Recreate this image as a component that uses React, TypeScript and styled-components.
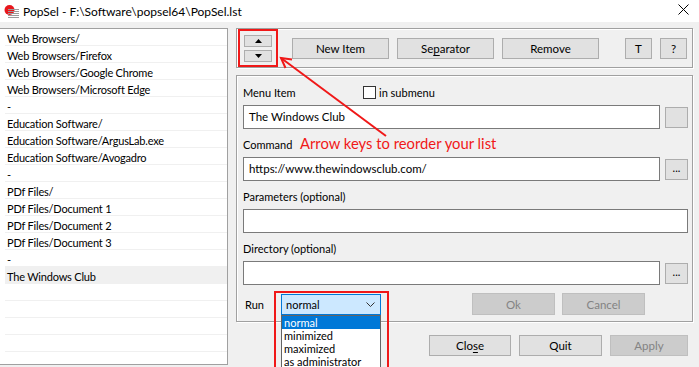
import styled, { createGlobalStyle } from "styled-components";

const GlobalStyle = createGlobalStyle`
  html, body {
    margin: 0;
    padding: 0;
    background: #f0f0f0;
  }
  body {
    font-family: Lato, "Liberation Sans", sans-serif;
    font-size: 11px;
    color: #000;
  }
`;

const items = [
  "Web Browsers/",
  "Web Browsers/Firefox",
  "Web Browsers/Google Chrome",
  "Web Browsers/Microsoft Edge",
  "-",
  "Education Software/",
  "Education Software/ArgusLab.exe",
  "Education Software/Avogadro",
  "-",
  "PDf Files/",
  "PDf Files/Document 1",
  "PDf Files/Document 2",
  "PDf Files/Document 3",
  "-",
  "The Windows Club",
  "",
  "",
  "",
  "",
];

const runModes = ["normal", "minimized", "maximized", "as administrator"];

const App = () => {
  return (
    <Window>
      <GlobalStyle />
      <TitleBar>
        <svg width="16" height="16" viewBox="0 0 16 16">
          <circle cx="6.5" cy="7" r="5" fill="#e8161c" />
          <rect x="5" y="6" width="11" height="1" fill="#9a9a9a" />
          <rect x="5" y="8" width="11" height="1" fill="#9a9a9a" />
          <rect x="5" y="10" width="11" height="1" fill="#9a9a9a" />
          <rect x="5" y="12" width="11" height="1" fill="#9a9a9a" />
          <rect x="5" y="14" width="11" height="1" fill="#9a9a9a" />
        </svg>
        <Title>PopSel - F:\Software\popsel64\PopSel.lst</Title>
        <CloseX>
          <svg width="11" height="11" viewBox="0 0 11 11">
            <path d="M0.5 0.5 L10.5 10.5 M10.5 0.5 L0.5 10.5" stroke="#000" strokeWidth="1" />
          </svg>
        </CloseX>
      </TitleBar>

      <Body>
        <ListBox>
          {items.map((txt, i) => (
            <Row key={i} $selected={txt === "The Windows Club"}>
              {txt}
            </Row>
          ))}
        </ListBox>

        <RightPane>
          <TopGroup>
            <ArrowWrap>
              <ArrowBtn>
                <svg width="7" height="4" viewBox="0 0 7 4">
                  <polygon points="3.5,0 7,4 0,4" fill="#000" />
                </svg>
              </ArrowBtn>
              <ArrowBtn>
                <svg width="7" height="4" viewBox="0 0 7 4">
                  <polygon points="0,0 7,0 3.5,4" fill="#000" />
                </svg>
              </ArrowBtn>
            </ArrowWrap>
            <Button $w={97} style={{ marginLeft: 14 }}>New Item</Button>
            <Button $w={97} style={{ marginLeft: 8 }}>
              Se<u>p</u>arator
            </Button>
            <Button $w={97} style={{ marginLeft: 8 }}>Remove</Button>
            <Button $w={27} style={{ marginLeft: 26 }}>T</Button>
            <Button $w={27} style={{ marginLeft: 8 }}>?</Button>
          </TopGroup>

          <EditGroup>
            <Label>
              <LabelText $w={120}>Menu Item</LabelText>
              <Check />
              <span>in submenu</span>
            </Label>
            <InputRow>
              <TextBox>The Windows Club</TextBox>
              <SmallBtn />
            </InputRow>

            <Label $gap>
              <LabelText $w={57}>Command</LabelText>
              <Note>Arrow keys to reorder your list</Note>
            </Label>
            <InputRow>
              <TextBox>https://www.thewindowsclub.com/</TextBox>
              <SmallBtn>...</SmallBtn>
            </InputRow>

            <Label $gap>Parameters (optional)</Label>
            <InputRow>
              <TextBox />
            </InputRow>

            <Label $gap>Directory (optional)</Label>
            <InputRow>
              <TextBox />
              <SmallBtn>...</SmallBtn>
            </InputRow>

            <RunRow>
              <RunLabel>Run</RunLabel>
              <SelectWrap>
                <span>normal</span>
                <svg width="9" height="5" viewBox="0 0 9 5">
                  <polyline points="0.5,0.5 4.5,4.5 8.5,0.5" fill="none" stroke="#333" strokeWidth="1" />
                </svg>
                <DropList>
                  {runModes.map((m, i) => (
                    <DropItem key={m} $active={i === 0}>
                      {m}
                    </DropItem>
                  ))}
                </DropList>
                <RedFrame />
              </SelectWrap>
              <Button $w={83} $h={22} $disabled style={{ marginLeft: 91 }}>
                Ok
              </Button>
              <Button $w={83} $h={22} $disabled style={{ marginLeft: 7 }}>
                Cancel
              </Button>
            </RunRow>
          </EditGroup>

          <BottomRow>
            <Button $w={82}>
              Clo<u>s</u>e
            </Button>
            <Button $w={83}>Quit</Button>
            <Button $w={78} $disabled>
              Apply
            </Button>
          </BottomRow>
        </RightPane>
      </Body>

      <Pointer width="699" height="367" viewBox="0 0 699 367">
        <path d="M281 58 L386 136" stroke="#f01818" strokeWidth="2" fill="none" />
        <path d="M292 59.5 L281 58 L285.5 68" stroke="#f01818" strokeWidth="2" fill="none" />
      </Pointer>
    </Window>
  );
};

export default App;

const Window = styled.div`
  width: 699px;
  height: 367px;
  position: relative;
  overflow: hidden;
  display: flex;
  flex-direction: column;
  background: #f0f0f0;
`;

const TitleBar = styled.div`
  height: 22px;
  background: #fff;
  display: flex;
  align-items: center;
  padding-left: 3px;
  flex-shrink: 0;
`;

const Title = styled.div`
  margin-left: 4px;
  font-size: 12px;
  margin-top: 1px;
`;

const CloseX = styled.div`
  margin-left: auto;
  margin-right: 10px;
  margin-top: -4px;
  display: flex;
`;

const Body = styled.div`
  flex: 1;
  display: flex;
  padding-top: 6px;
  min-height: 0;
`;

const ListBox = styled.div`
  width: 228px;
  height: 337px;
  box-sizing: border-box;
  border-top: 1px solid #a0a0a0;
  border-right: 1px solid #a0a0a0;
  border-bottom: 1px solid #a0a0a0;
  background: #fff;
  padding-left: 5px;
  flex-shrink: 0;
`;

const Row = styled.div<{ $selected?: boolean }>`
  height: 17px;
  box-sizing: border-box;
  border-bottom: 1px solid #f0f0f0;
  padding: 3px 0 0 2px;
  line-height: 13px;
  font-size: 11px;
  letter-spacing: -0.2px;
  white-space: nowrap;
  background: ${(p) => (p.$selected ? "#f0f0f0" : "#fff")};
`;

const RightPane = styled.div`
  flex: 1;
  display: flex;
  flex-direction: column;
  padding: 0 6px 0 8px;
`;

const etched = `
  border: 1px solid #a0a0a0;
  box-shadow: inset 1px 1px 0 #fff, 1px 1px 0 #fff;
`;

const TopGroup = styled.div`
  ${etched}
  height: 40px;
  box-sizing: border-box;
  display: flex;
  align-items: center;
`;

const ArrowWrap = styled.div`
  align-self: stretch;
  width: 40px;
  box-sizing: border-box;
  margin-left: 1px;
  border: 2px solid #f01818;
  padding: 4px 0 0 4px;
  display: flex;
  flex-direction: column;
  gap: 3px;
`;

const ArrowBtn = styled.div`
  width: 28px;
  height: 12px;
  box-sizing: border-box;
  border: 1px solid #adadad;
  background: #e1e1e1;
  display: flex;
  align-items: center;
  justify-content: center;
`;

const Button = styled.div<{ $w: number; $h?: number; $disabled?: boolean }>`
  width: ${(p) => p.$w}px;
  height: ${(p) => p.$h ?? 21}px;
  box-sizing: border-box;
  border: 1px solid ${(p) => (p.$disabled ? "#bfbfbf" : "#adadad")};
  background: ${(p) => (p.$disabled ? "#cccccc" : "#e1e1e1")};
  color: ${(p) => (p.$disabled ? "#838383" : "#000")};
  font-size: 11.5px;
  display: flex;
  align-items: center;
  justify-content: center;
  flex-shrink: 0;
  white-space: nowrap;
  u {
    text-decoration-thickness: 1px;
    text-underline-offset: 2px;
  }
`;

const EditGroup = styled.div`
  ${etched}
  margin-top: 7px;
  height: 247px;
  box-sizing: border-box;
  padding: 8px 4px 0 6px;
  display: flex;
  flex-direction: column;
`;

const Label = styled.div<{ $gap?: boolean }>`
  height: 16px;
  display: flex;
  align-items: center;
  margin-top: ${(p) => (p.$gap ? 7 : 0)}px;
  white-space: nowrap;
`;

const LabelText = styled.span<{ $w: number }>`
  width: ${(p) => p.$w}px;
  flex-shrink: 0;
`;

const Check = styled.div`
  width: 13px;
  height: 13px;
  box-sizing: border-box;
  border: 1px solid #333;
  background: #fff;
  margin-right: 3px;
`;

const Note = styled.span`
  font-family: Lato, "Liberation Sans", sans-serif;
  font-size: 14.8px;
  color: #f01818;
  margin-top: -3px;
`;

const InputRow = styled.div`
  display: flex;
  align-items: center;
  gap: 5px;
  margin-top: 5px;
`;

const TextBox = styled.div`
  flex: 1;
  height: 24px;
  box-sizing: border-box;
  border: 1px solid #7a7a7a;
  background: #fff;
  padding-left: 5px;
  line-height: 22px;
  font-size: 11.5px;
`;

const SmallBtn = styled.div`
  width: 23px;
  height: 21px;
  box-sizing: border-box;
  border: 1px solid #adadad;
  background: #e1e1e1;
  display: flex;
  align-items: center;
  justify-content: center;
  padding-bottom: 3px;
`;

const RunRow = styled.div`
  display: flex;
  align-items: center;
  margin-top: 8px;
  height: 22px;
`;

const RunLabel = styled.span`
  width: 38px;
  padding-left: 2px;
  box-sizing: border-box;
`;

const SelectWrap = styled.div`
  position: relative;
  width: 100px;
  height: 21px;
  box-sizing: border-box;
  border: 1px solid #0078d7;
  background: #cce8ff;
  padding: 0 5px 0 4px;
  display: flex;
  align-items: center;
  justify-content: space-between;
`;

const DropList = styled.div`
  position: absolute;
  left: -1px;
  top: calc(100% + 1px);
  width: 100px;
  box-sizing: border-box;
  border: 1px solid #646464;
  background: #fff;
  z-index: 2;
`;

const DropItem = styled.div<{ $active?: boolean }>`
  height: 13px;
  line-height: 13px;
  padding-left: 2px;
  font-size: 11px;
  background: ${(p) => (p.$active ? "#0078d7" : "#fff")};
  color: ${(p) => (p.$active ? "#fff" : "#000")};
`;

const RedFrame = styled.div`
  position: absolute;
  left: -8px;
  top: -4px;
  width: 115px;
  height: 90px;
  box-sizing: border-box;
  border: 2px solid #f01818;
  z-index: 3;
`;

const BottomRow = styled.div`
  display: flex;
  justify-content: flex-end;
  gap: 8px;
  margin-top: 13px;
  padding-right: 5px;
`;

const Pointer = styled.svg`
  position: absolute;
  left: 0;
  top: 0;
  pointer-events: none;
`;
